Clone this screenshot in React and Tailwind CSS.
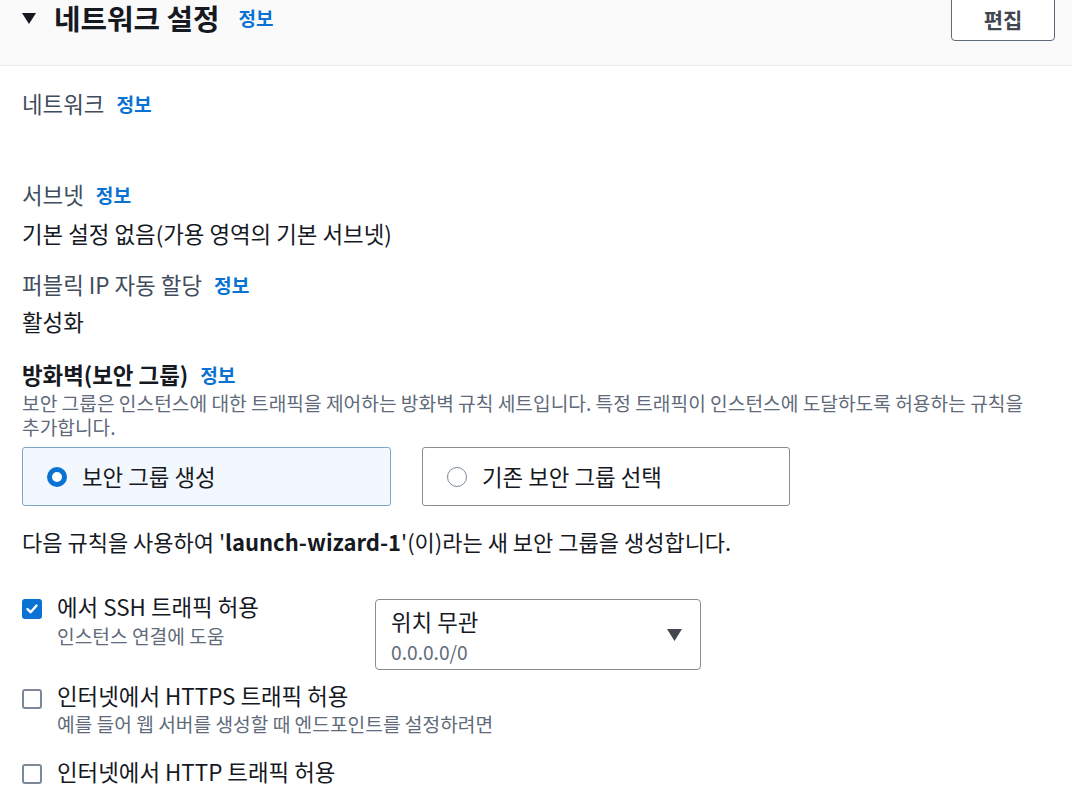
import React from "react";

const F = { fontFamily: '"Noto Sans CJK KR", "Noto Sans", sans-serif' };

function Info() {
  return <span className="ml-[12px] text-[19.2px] font-bold text-[#0972d3]">정보</span>;
}

function Checkbox({ checked }) {
  return checked ? (
    <div className="w-[20px] h-[20px] rounded-[3px] bg-[#0972d3] flex items-center justify-center shrink-0">
      <svg width="14" height="14" viewBox="0 0 14 14">
        <path d="M2.5 7.2 L5.6 10.2 L11.5 3.6" stroke="white" strokeWidth="2.4" fill="none" strokeLinecap="round" strokeLinejoin="round" />
      </svg>
    </div>
  ) : (
    <div className="w-[20px] h-[20px] rounded-[3px] border-2 border-[#7d8998] bg-white shrink-0" />
  );
}

export default function App() {
  return (
    <div style={F} className="w-[1072px] h-[788px] bg-white overflow-hidden text-[#16191f]">
      <div className="h-[66px] bg-[#fafafa] border-b border-[#e9ebed] flex items-start justify-between pl-[22px] pr-[17px]">
        <div className="flex items-center h-[36px]">
          <svg width="14" height="11" viewBox="0 0 14 11" className="mr-[18px]">
            <path d="M0 0 H14 L7 11 Z" fill="#16191f" />
          </svg>
          <span className="text-[28.8px] leading-[34px] font-bold">네트워크 설정</span>
          <span className="ml-[19px] text-[19px] font-bold text-[#0972d3]">정보</span>
        </div>
        <div className="mt-[-6px] w-[104px] h-[47px] border border-[#5f6b7a] rounded-[4px] bg-white flex items-center justify-center pt-[4px]">
          <span className="text-[21px] font-bold text-[#424650]">편집</span>
        </div>
      </div>

      <div className="pl-[22px] pr-[20px] text-[22.4px]">
        <div className="mt-[22px] h-[32px] flex items-center text-[#414d5c]">
          네트워크<Info />
        </div>
        <div className="h-[59px]" />
        <div className="h-[32px] flex items-center text-[#414d5c]">
          서브넷<Info />
        </div>
        <div className="mt-[7px] h-[32px] flex items-center">기본 설정 없음(가용 영역의 기본 서브넷)</div>
        <div className="mt-[19px] h-[32px] flex items-center text-[#414d5c]">
          퍼블릭 IP 자동 할당<Info />
        </div>
        <div className="mt-[5px] h-[32px] flex items-center">활성화</div>

        <div className="mt-[21px] h-[32px] flex items-center font-bold">
          방화벽(보안 그룹)<Info />
        </div>
        <div className="text-[19.2px] leading-[24px] text-[#5f6b7a] break-keep">
          보안 그룹은 인스턴스에 대한 트래픽을 제어하는 방화벽 규칙 세트입니다. 특정 트래픽이 인스턴스에 도달하도록 허용하는 규칙을 추가합니다.
        </div>

        <div className="mt-[8px] flex gap-[31px]">
          <div className="w-[369px] h-[59px] rounded-[3px] border border-[#7aa7c7] bg-[#f2f8fd] flex items-center pl-[24px]">
            <div className="w-[20px] h-[20px] rounded-full border-[5px] border-[#0972d3] bg-white mr-[15px]" />
            <span>보안 그룹 생성</span>
          </div>
          <div className="w-[368px] h-[59px] rounded-[3px] border border-[#8c8c94] bg-white flex items-center pl-[24px]">
            <div className="w-[20px] h-[20px] rounded-full border-[1.5px] border-[#7d8998] bg-white mr-[15px]" />
            <span>기존 보안 그룹 선택</span>
          </div>
        </div>

        <div className="mt-[19px] h-[32px] flex items-center whitespace-pre text-[22px]">
          다음 규칙을 사용하여 '<b>launch-wizard-1</b>'(이)라는 새 보안 그룹을 생성합니다.
        </div>

        <div className="mt-[34px] flex">
          <div className="w-[353px] flex">
            <div className="mt-[8px]"><Checkbox checked /></div>
            <div className="ml-[15px]">
              <div className="h-[32px] flex items-center">에서 SSH 트래픽 허용</div>
              <div className="text-[19.2px] text-[#5f6b7a] leading-[24px] mt-[1px]">인스턴스 연결에 도움</div>
            </div>
          </div>
          <div className="mt-[8px] w-[326px] h-[71px] border border-[#8c8c94] rounded-[4px] flex items-center justify-between pl-[15px] pr-[18px]">
            <div className="self-start pt-[5px]">
              <div className="leading-[32px]">위치 무관</div>
              <div className="text-[19.2px] leading-[24px] text-[#5f6b7a] mt-[3px]">0.0.0.0/0</div>
            </div>
            <svg width="15" height="12" viewBox="0 0 15 12">
              <path d="M0 0 H15 L7.5 12 Z" fill="#424650" />
            </svg>
          </div>
        </div>

        <div className="mt-[10px] flex">
          <div className="mt-[9px]"><Checkbox /></div>
          <div className="ml-[15px]">
            <div className="h-[32px] flex items-center">인터넷에서 HTTPS 트래픽 허용</div>
            <div className="text-[19.2px] text-[#5f6b7a] leading-[24px]">예를 들어 웹 서버를 생성할 때 엔드포인트를 설정하려면</div>
          </div>
        </div>

        <div className="mt-[20px] flex">
          <div className="mt-[8px]"><Checkbox /></div>
          <div className="ml-[15px]">
            <div className="h-[32px] flex items-center">인터넷에서 HTTP 트래픽 허용</div>
          </div>
        </div>
      </div>
    </div>
  );
}
